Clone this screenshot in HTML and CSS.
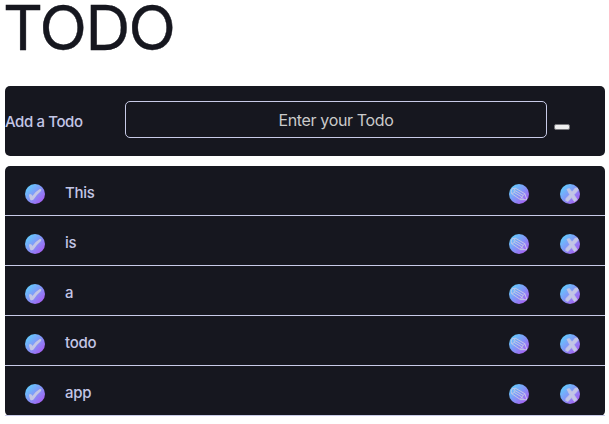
FILE: index.html
```html
<!DOCTYPE html>
<html lang="en">
<head>
<meta charset="utf-8">
<title>Todo</title>
<link rel="stylesheet" href="styles.css">
</head>
<body>
<svg class="defs" width="0" height="0" aria-hidden="true">
  <symbol id="check" viewBox="0 0 20 20"><path d="M4 11.2Q4.2 9.8 5.8 10.2Q7 10.4 7.4 12Q10.5 7.2 14.8 4.9L16.3 5.2L16 7Q11.8 10.4 8.6 15.6Q7 17 5.3 15.8Q4.5 14 4 11.2Z" fill="currentColor"/></symbol>
  <symbol id="pencil" viewBox="0 0 20 20"><path d="M3 4.8L6.4 4.2L15.8 9.7L18 15.8L11.4 15.6L2.5 9.6Q1.7 7 3 4.8ZM6.4 4.2Q4.3 6.2 5.4 8.6L2.5 9.6M5.4 8.6L12.7 13L11.4 15.6M5.7 6.4L14.3 11.5L15.8 9.7M14.3 11.5L12.7 13L14.8 15.5" fill="none" stroke="currentColor" stroke-width="1" stroke-linejoin="round"/></symbol>
  <symbol id="cross" viewBox="0 0 20 20"><path d="M6.9 5.2L9.4 4.5L12 8L15.2 4.1L18 4L18.1 6.3L14 10.8L17.2 15.6L14.5 17.7L11.5 13.6L8.1 17.4L5.7 16.6L6 14.4L9.7 10.7Z" fill="currentColor" stroke="currentColor" stroke-width=".7"/></symbol>
</svg>
<h1>TODO</h1>
<form class="add">
  <label for="todo">Add a Todo</label>
  <input id="todo" type="text" placeholder="Enter your Todo">
  <button type="button" class="submit" aria-label="Add"></button>
</form>
<ul class="list">
  <li><svg class="icon"><use href="#check"/></svg><span>This</span><svg class="icon"><use href="#pencil"/></svg><svg class="icon"><use href="#cross"/></svg></li>
  <li><svg class="icon"><use href="#check"/></svg><span>is</span><svg class="icon"><use href="#pencil"/></svg><svg class="icon"><use href="#cross"/></svg></li>
  <li><svg class="icon"><use href="#check"/></svg><span>a</span><svg class="icon"><use href="#pencil"/></svg><svg class="icon"><use href="#cross"/></svg></li>
  <li><svg class="icon"><use href="#check"/></svg><span>todo</span><svg class="icon"><use href="#pencil"/></svg><svg class="icon"><use href="#cross"/></svg></li>
  <li><svg class="icon"><use href="#check"/></svg><span>app</span><svg class="icon"><use href="#pencil"/></svg><svg class="icon"><use href="#cross"/></svg></li>
</ul>
</body>
</html>
```
FILE: styles.css
```css
* { box-sizing: border-box; }
body {
  margin: 0;
  padding: 0 4px 0 5px;
  background: #fff;
  color: #c3c6e6;
  font: 450 15px/20px Inter, "Liberation Sans", sans-serif;
}
.defs { display: block; }
h1 {
  margin: 0 0 0 -2px;
  height: 86px;
  color: #16171f;
  font-size: 62px;
  font-weight: 400;
  line-height: 55px;
  letter-spacing: -1.6px;
  -webkit-text-stroke: 0.4px #16171f;
}
.add {
  display: flex;
  align-items: center;
  height: 70px;
  margin-bottom: 10px;
  border-radius: 5px;
  background: #16171f;
}
label {
  width: 120px;
  padding-top: 2px;
  letter-spacing: -0.4px;
  white-space: nowrap;
}
input {
  width: 422px;
  height: 37px;
  margin: 0 7px 3px 0;
  padding: 1px 2px;
  border: 1px solid #c8cbe7;
  border-radius: 5px;
  background: transparent;
  font: 400 16px Inter, "Liberation Sans", sans-serif;
  letter-spacing: -0.35px;
  text-align: center;
}
input::placeholder { color: #cacaca; opacity: 1; }
.submit {
  width: 16px;
  height: 6px;
  margin: 12px 0 0;
  padding: 0;
  border: 1px solid #77777b;
  border-radius: 2px;
  background: #efefef;
}
.list {
  margin: 0;
  padding: 0;
  border-radius: 5px;
  background: #16171f;
  list-style: none;
}
li {
  display: flex;
  align-items: center;
  height: 50px;
  padding: 7px 25px 0 20px;
  border-bottom: 1px solid #c8cbe7;
}
li span {
  flex: 1;
  margin: 0 0 2px 20px;
  letter-spacing: -0.3px;
}
.icon {
  flex: none;
  width: 20px;
  height: 20px;
  border-radius: 50%;
  background: linear-gradient(135deg, #57ddff, #b04df0);
}
.icon + .icon { margin-left: 31px; }
```
